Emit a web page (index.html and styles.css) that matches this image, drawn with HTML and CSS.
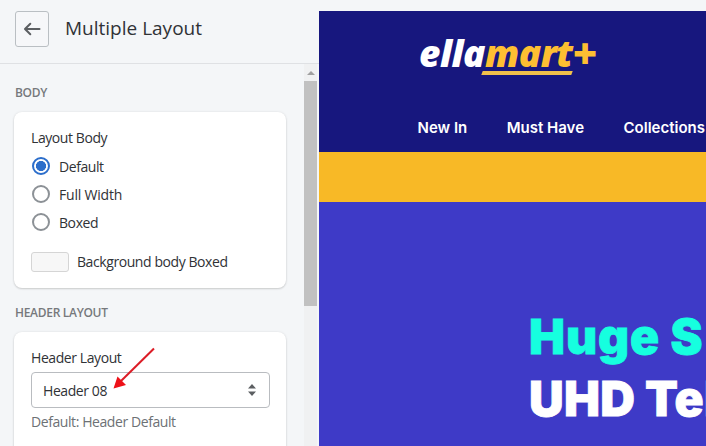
FILE: index.html
```html
<!DOCTYPE html>
<html lang="en">
<head>
<meta charset="utf-8">
<title>Multiple Layout</title>
<link rel="stylesheet" href="styles.css">
</head>
<body>
<div class="app">
  <aside class="sidebar">
    <header class="topbar">
      <button class="back" aria-label="Back">
        <svg width="18" height="14" viewBox="0 0 18 14"><path d="M16.500 7H2.500M7.300 1.800L2 7l5.300 5.200" fill="none" stroke="#5c5f62" stroke-width="2" stroke-linecap="round" stroke-linejoin="round"/></svg>
      </button>
      <h1 class="title">Multiple Layout</h1>
    </header>
    <div class="panel">
      <div class="settings">
        <h2 class="section section-body">BODY</h2>
        <section class="card card-body">
          <div class="label">Layout Body</div>
          <label class="option"><span class="radio checked"></span><span>Default</span></label>
          <label class="option"><span class="radio"></span><span class="full-width">Full Width</span></label>
          <label class="option"><span class="radio"></span><span>Boxed</span></label>
          <div class="color-row"><span class="swatch"></span><span>Background body Boxed</span></div>
        </section>
        <h2 class="section section-header">HEADER LAYOUT</h2>
        <section class="card card-header">
          <div class="label">Header Layout</div>
          <div class="select">
            <span>Header 08</span>
            <svg width="8" height="12" viewBox="0 0 8 12"><path d="M0 4.500L4 0l4 4.500zM0 7.500L4 12l4-4.500z" fill="#5c5f62"/></svg>
          </div>
          <div class="help">Default: Header Default</div>
          <svg class="pointer" width="46" height="44" viewBox="0 0 46 44"><path d="M42 3.500L9 36" stroke="#dc1c26" stroke-width="2" fill="none"/><path d="M1.500 43.500L5.500 31.500L14 40z" fill="#ee1118"/></svg>
        </section>
      </div>
      <div class="scrollbar"><span class="up"></span><span class="thumb"></span></div>
    </div>
  </aside>
  <main class="preview">
    <div class="site-header">
      <div class="logo"><span>ella</span><span class="mart">mart</span><span class="plus">+</span></div>
      <nav class="nav"><span>New In</span><span>Must Have</span><span>Collections</span></nav>
    </div>
    <div class="strip"></div>
    <div class="hero"><div class="sale">Huge S</div><div class="product">UHD Tel</div></div>
  </main>
</div>
</body>
</html>
```
FILE: styles.css
```css
* { box-sizing: border-box; }
body { margin: 0; background: #f4f6f8; font-family: "Open Sans", sans-serif; }
h1, h2 { margin: 0; font-weight: 400; }
.app { display: flex; width: 706px; height: 446px; overflow: hidden; }
.sidebar { width: 319px; flex: none; display: flex; flex-direction: column; }
.topbar { height: 64px; flex: none; display: flex; align-items: flex-start; padding: 11px 0 0 15px; border-bottom: 1px solid #dfe1e4; }
.back { width: 34px; height: 36px; padding: 0; display: flex; align-items: center; justify-content: center; background: #f6f7f9; border: 1px solid #babfc3; border-radius: 3px; }
.title { margin-left: 16px; font-size: 19px; line-height: 34px; color: #303236; white-space: nowrap; }
.panel { flex: 1; min-height: 0; display: flex; }
.settings { width: 304px; padding: 20px 18px 0 14px; font-size: 14px; letter-spacing: -0.42px; color: #303236; }
.section { padding-left: 1px; font-size: 12px; font-weight: 600; line-height: 18px; letter-spacing: -0.3px; color: #76797c; white-space: nowrap; }
.section-header { margin-top: 16px; }
.card { position: relative; width: 272px; background: #fff; border-radius: 8px; box-shadow: 0 0 3px rgba(23,24,24,.08), 0 1px 2px rgba(0,0,0,.15); padding: 16px 17px 0; white-space: nowrap; }
.card-body { margin-top: 10px; height: 176px; }
.card-header { margin-top: 10px; height: 140px; }
.label { line-height: 20px; }
.option { height: 28px; display: flex; align-items: center; gap: 9px; }
.label + .option { margin-top: 4px; }
.option .radio { margin-left: 1px; flex: none; }
.full-width { letter-spacing: -0.2px; }
.radio { width: 18px; height: 18px; border: 2px solid #8c9196; border-radius: 50%; }
.radio.checked { border-color: #2c6ecb; background: radial-gradient(circle, #2c6ecb 0 4.8px, #fff 5.3px); }
.color-row { display: flex; align-items: center; gap: 8px; margin-top: 16px; height: 20px; line-height: 20px; }
.swatch { width: 38px; height: 20px; border: 1px solid #d5d5d5; border-radius: 3px; background: #f7f7f7; }
.select { margin-top: 4px; width: 239px; height: 36px; border: 1px solid #b9bcc0; border-radius: 4px; display: flex; align-items: center; justify-content: space-between; padding: 0 13px 0 11px; }
.help { margin-top: 4px; line-height: 20px; color: #6d7175; }
.pointer { position: absolute; left: 98px; top: 13px; }
.scrollbar { width: 13px; background: #f0f1f2; display: flex; flex-direction: column; align-items: center; }
.up { margin-top: 7px; border: 4px solid transparent; border-top: 0; border-bottom: 4px solid #a0a0a0; }
.thumb { margin-top: 6px; width: 13px; height: 225px; background: #c1c1c1; }
.preview { width: 387px; flex: none; margin-top: 11px; overflow: hidden; white-space: nowrap; }
.site-header { height: 141px; background: #17177e; padding: 23px 0 0 100px; }
.logo { display: flex; height: 43px; color: #fff; font: italic 800 37px/38px "Open Sans", sans-serif; letter-spacing: -0.5px; }
.mart { color: #fdbf32; position: relative; }
.mart::after { content: ""; position: absolute; left: -3px; top: 37px; width: 90px; height: 4px; background: #f0c04b; transform: skewX(-20deg); }
.plus { color: #fdbf32; font-size: 42px; }
.nav { display: flex; gap: 39.5px; margin: 41px 0 0 -1.5px; color: #fff; font: 600 15px/20px Inter, sans-serif; }
.strip { height: 50px; background: #f8b926; }
.hero { height: 244px; background: #3e3ac7; padding: 104px 0 0 210px; color: #fff; font: 900 48px/62px Inter, sans-serif; -webkit-text-stroke: 0.8px currentColor; }
.sale { color: #16ffdf; letter-spacing: 0.9px; }
.product { letter-spacing: 0.3px; }
```
